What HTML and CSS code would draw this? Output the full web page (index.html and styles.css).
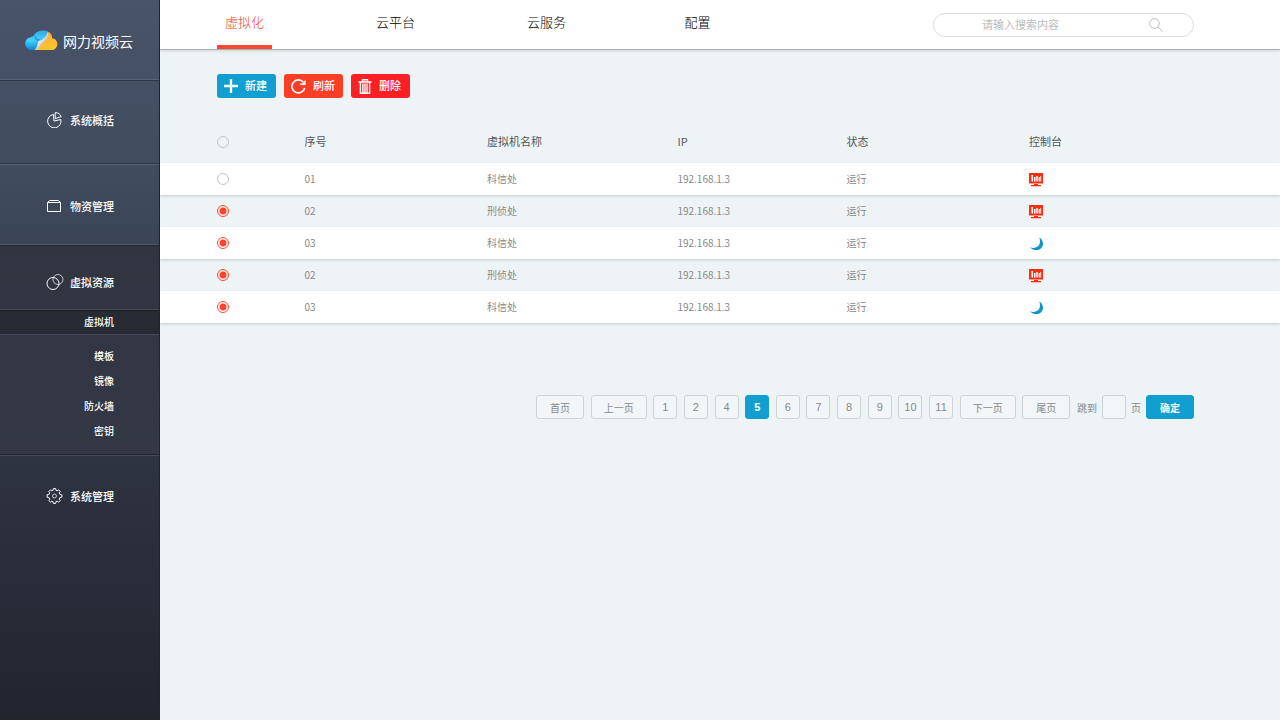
FILE: index.html
```
<!DOCTYPE html>
<html lang="zh-CN">
<head>
  <meta charset="UTF-8">
  <meta name="viewport" content="width=device-width, initial-scale=1.0">
  <title>网力视频云</title>
  <link rel="stylesheet" href="styles.css">
</head>

<body>
  <!-- iconos reutilizados -->
  <svg class="sprite" aria-hidden="true">
    <symbol id="monitor" viewBox="0 0 14 14">
      <path fill="#fb2c10" d="M0 0h14v10.500H0z M5 11h4v1h3v1.200H2V12h3z"/>
      <path fill="#fff" d="M2.500 2h1.500v6.500H2.500z M5 4h1.500v4.500H5z M7.300 3h1.500v5.500H7.300z M9.600 4h1.300v4.500H9.600z M11.300 3h0.900v5.500h-0.900z"/>
    </symbol>
    <symbol id="moon" viewBox="0 0 14 14">
      <path fill="#0f96c8" d="M10.200 0.500C14 2.500 15 7 13 10.200C10.400 14 4.600 14.400 1 10.200C4.200 11.600 7.800 10.800 9.800 8.200C11.400 6 11.400 3 10.200 0.500z"/>
    </symbol>
  </svg>

  <aside class="sidebar">
    <div class="logo">
      <svg width="33" height="21" viewBox="0 0 33 21" aria-hidden="true">
        <defs>
          <linearGradient id="gold" x1="0" y1="0" x2="0.3" y2="1">
            <stop offset="0" stop-color="#f8a648"/>
            <stop offset="1" stop-color="#fec52e"/>
          </linearGradient>
          <linearGradient id="blue" x1="0" y1="0" x2="0" y2="1">
            <stop offset="0" stop-color="#2fa8ea"/>
            <stop offset="0.5" stop-color="#43d2fb"/>
            <stop offset="1" stop-color="#1583d6"/>
          </linearGradient>
          <linearGradient id="fold" x1="0" y1="0" x2="1" y2="1">
            <stop offset="0.200" stop-color="#9fb2c6"/>
            <stop offset="0.480" stop-color="#e6eaee"/>
            <stop offset="0.700" stop-color="#b9b4b4"/>
          </linearGradient>
        </defs>
        <path fill="url(#gold)" d="M11 20L22.500 1.500C26 3 27.300 5.300 27 8.300C30.500 8.800 32.500 11.300 32.300 14.500C32 18 29.500 20 26.500 20z"/>
        <path fill="url(#blue)" d="M6 20C2.500 19.500 0.300 17 0.300 13.800C0.300 10 2.300 7.800 5.500 7.300C7.500 6.800 9 5.500 10.300 3.500C12.500 0.500 19 -0.500 23 1.500C22 6 19 8.500 16 10C13 12 14 17 10 20z"/>
        <path fill="#1d86cf" opacity="0.6" d="M10 4.500C10.500 8 12.500 9.500 15.500 9L13 11.500C10.500 11 9 9 10 4.500z"/>
        <path fill="url(#fold)" d="M9.500 20C13 17 12 14 13.500 11C17.500 10 21.500 7 22.900 2.500C23.800 5.500 22 9 20 11.300C16.800 12.500 15 17.500 11 20z"/>
      </svg>
      <span>网力视频云</span>
    </div>

    <nav class="menu">
      <a class="menu-item first" href="#">
        <svg width="18" height="16" viewBox="0 0 18 16" aria-hidden="true">
          <path d="M7.500 2.500A6.700 6.700 0 1 0 14.800 7.500L8 9z M9.200 0.600V6.600L15.200 4.600C14.300 2.200 12.300 0.600 9.200 0.600z"/>
        </svg>
        <span>系统概括</span>
      </a>

      <a class="menu-item" href="#">
        <svg width="18" height="16" viewBox="0 0 18 16" aria-hidden="true">
          <path d="M1.500 4.500h13v9h-13z M1.500 4.500L3.500 2.500h9l2 2"/>
        </svg>
        <span>物资管理</span>
      </a>

      <div class="menu-group">
        <a class="menu-item open" href="#">
          <svg width="18" height="16" viewBox="0 0 18 16" aria-hidden="true">
            <circle cx="7" cy="9.500" r="6"/>
            <circle cx="12" cy="5.500" r="5" opacity="0.7"/>
          </svg>
          <span>虚拟资源</span>
        </a>
        <a class="sub-item active" href="#">虚拟机</a>
        <div class="submenu">
          <a class="sub-item" href="#">模板</a>
          <a class="sub-item" href="#">镜像</a>
          <a class="sub-item" href="#">防火墙</a>
          <a class="sub-item" href="#">密钥</a>
        </div>
      </div>

      <a class="menu-item last" href="#">
        <svg width="18" height="16" viewBox="0 0 18 16" aria-hidden="true">
          <path d="M7.100 2.300L7.300 0.600H9.700L9.900 2.300L11.200 2.800L12.500 1.800L14.200 3.500L13.200 4.800L13.700 6.100L15.900 6.800V9.200L13.700 9.900L13.200 11.200L14.200 12.500L12.500 14.200L11.200 13.200L9.900 13.700L9.700 15.400H7.300L7.100 13.700L5.800 13.200L4.500 14.200L2.800 12.500L3.800 11.200L3.300 9.900L1.100 9.200V6.800L3.300 6.100L3.800 4.800L2.800 3.500L4.500 1.800L5.800 2.800z"/>
          <circle cx="8.500" cy="8" r="2" opacity="0.7"/>
        </svg>
        <span>系统管理</span>
      </a>
    </nav>
  </aside>

  <div class="main">
    <header class="topbar">
      <nav class="tabs">
        <a class="tab active" href="#">虚拟化</a>
        <a class="tab" href="#">云平台</a>
        <a class="tab" href="#">云服务</a>
        <a class="tab" href="#">配置</a>
      </nav>
      <form class="search">
        <input type="text" placeholder="请输入搜索内容" aria-label="搜索">
        <button type="button" aria-label="搜索">
          <svg width="14" height="14" viewBox="0 0 14 14" fill="none" stroke="#bbb" aria-hidden="true">
            <circle cx="5.500" cy="5.500" r="4.800"/>
            <path d="M9 9l4.500 4.500"/>
          </svg>
        </button>
      </form>
    </header>

    <div class="toolbar">
      <button class="btn blue" type="button">
        <svg width="14" height="14" viewBox="0 0 14 14" aria-hidden="true">
          <path fill="none" stroke="#fff" stroke-width="2.400" d="M7 0v14M0 7h14"/>
        </svg>
        <span>新建</span>
      </button>
      <button class="btn orange" type="button">
        <svg width="15" height="15" viewBox="0 0 15 15" aria-hidden="true">
          <path fill="none" stroke="#fff" stroke-width="1.700" d="M13.700 9A6.500 6.500 0 1 1 12.400 3.300"/>
          <path fill="#fff" d="M14.600 0.600V6H9.200V4.600h2.600z"/>
        </svg>
        <span>刷新</span>
      </button>
      <button class="btn red" type="button">
        <svg width="14" height="15" viewBox="0 0 14 15" fill="none" stroke="#fff" aria-hidden="true">
          <path stroke-width="1.400" d="M0.500 3h13M4.500 3V0.800h5V3M2.400 3v11.200h9.200V3M4.900 4.500v9M7 4.500v9M9.100 4.500v9"/>
        </svg>
        <span>删除</span>
      </button>
    </div>

    <table class="vm-table">
      <colgroup>
        <col class="col-check">
        <col class="col-num">
        <col class="col-name">
        <col class="col-ip">
        <col class="col-state">
        <col>
      </colgroup>
      <thead>
        <tr>
          <th><input type="checkbox" aria-label="全选"></th>
          <th>序号</th>
          <th>虚拟机名称</th>
          <th>IP</th>
          <th>状态</th>
          <th>控制台</th>
        </tr>
      </thead>
      <tbody>
        <tr>
          <td><input type="checkbox" aria-label="01"></td>
          <td>01</td>
          <td>科信处</td>
          <td>192.168.1.3</td>
          <td>运行</td>
          <td><svg class="console"><use href="#monitor"/></svg></td>
        </tr>
        <tr>
          <td><input type="checkbox" aria-label="02" checked></td>
          <td>02</td>
          <td>刑侦处</td>
          <td>192.168.1.3</td>
          <td>运行</td>
          <td><svg class="console"><use href="#monitor"/></svg></td>
        </tr>
        <tr>
          <td><input type="checkbox" aria-label="03" checked></td>
          <td>03</td>
          <td>科信处</td>
          <td>192.168.1.3</td>
          <td>运行</td>
          <td><svg class="console"><use href="#moon"/></svg></td>
        </tr>
        <tr>
          <td><input type="checkbox" aria-label="02" checked></td>
          <td>02</td>
          <td>刑侦处</td>
          <td>192.168.1.3</td>
          <td>运行</td>
          <td><svg class="console"><use href="#monitor"/></svg></td>
        </tr>
        <tr>
          <td><input type="checkbox" aria-label="03" checked></td>
          <td>03</td>
          <td>科信处</td>
          <td>192.168.1.3</td>
          <td>运行</td>
          <td><svg class="console"><use href="#moon"/></svg></td>
        </tr>
      </tbody>
    </table>

    <div class="pager">
      <button class="page wide" type="button">首页</button>
      <button class="page wider" type="button">上一页</button>
      <button class="page" type="button">1</button>
      <button class="page" type="button">2</button>
      <button class="page" type="button">4</button>
      <button class="page current" type="button">5</button>
      <button class="page" type="button">6</button>
      <button class="page" type="button">7</button>
      <button class="page" type="button">8</button>
      <button class="page" type="button">9</button>
      <button class="page" type="button">10</button>
      <button class="page" type="button">11</button>
      <button class="page wider" type="button">下一页</button>
      <button class="page wide" type="button">尾页</button>
      <div class="jump">
        <label for="salto">跳到</label>
        <input class="page" type="text" id="salto">
        <span>页</span>
        <button class="page wide current" type="button">确定</button>
      </div>
    </div>
  </div>
</body>
</html>
```

FILE: styles.css
```
* {
  box-sizing: border-box;
}
body {
  margin: 0;
  min-height: 100vh;
  display: flex;
  background: #eef4f5;
  font-family: "Noto Sans CJK SC", sans-serif;
  font-size: 10px;
  color: #888;
}
a {
  color: inherit;
  text-decoration: none;
}
button, input {
  font-family: inherit;
  margin: 0;
}
button {
  cursor: pointer;
}
.sprite {
  position: absolute;
  width: 0;
  height: 0;
}

/* menú lateral */
.sidebar {
  flex: none;
  width: 160px;
  color: #fff;
  background: linear-gradient(#4a5469, #414b5e 25%, #3b4457 34%, #2e3341 64%, #21252e);
  border-right: 1px solid #1c2436;
}
.logo {
  display: flex;
  align-items: center;
  gap: 5px;
  height: 80px;
  padding: 2px 0 0 25px;
  font-size: 14px;
  border-bottom: 1px solid #5b6579;
}
.menu-item {
  display: flex;
  align-items: center;
  justify-content: flex-end;
  gap: 6px;
  height: 81px;
  padding: 2px 45px 0 0;
  font-size: 11px;
  font-weight: 500;
  border-top: 1px solid #566074;
  border-bottom: 1px solid #4d5a6c;
}
.menu-item svg {
  fill: none;
  stroke: #fff;
}
.menu-item.first {
  height: 84px;
  padding: 0 45px 4px 0;
  border-top-color: #2e3646;
  border-bottom-color: #2e3646;
}
.menu-group {
  background: linear-gradient(#303540, #333845);
  border-top: 1px solid #22262f;
  border-bottom: 1px solid #20242e;
}
.menu-item.open {
  height: 64px;
  padding-top: 9px;
  border-top: 0;
  border-bottom-color: #454c59;
}
.menu-item.last {
  height: 81px;
  padding-top: 0;
  border-top-color: #454b5a;
  border-bottom: 0;
}
.sub-item {
  display: block;
  height: 25px;
  line-height: 25px;
  padding-right: 45px;
  text-align: right;
  font-weight: 500;
}
.sub-item.active {
  line-height: 22px;
  background: #262a33;
  border-top: 1px solid #1b1e25;
  border-bottom: 1px solid #454c59;
}
.submenu {
  padding: 8px 0 11px;
}

/* barra superior */
.main {
  flex: 1;
  min-width: 0;
}
.topbar {
  display: flex;
  justify-content: space-between;
  height: 50px;
  padding: 0 86px 0 57px;
  background: #fff;
  border-bottom: 1px solid #a5b0b6;
  box-shadow: 0 1px 3px rgba(0, 40, 50, 0.15);
}
.tabs {
  display: flex;
  gap: 96px;
}
.tab {
  width: 55px;
  height: 49px;
  text-align: center;
  line-height: 43px;
  font-size: 13px;
  font-weight: 300;
  color: #000;
  border-bottom: 4px solid transparent;
}
.tab.active {
  color: #fe3a22;
  border-bottom-color: #fe4a33;
}
.search {
  display: flex;
  align-items: center;
  width: 261px;
  height: 24px;
  margin-top: 13px;
  padding: 0 30px 0 48px;
  border: 1px solid #ddd;
  border-radius: 12px;
}
.search input {
  flex: 1;
  min-width: 0;
  padding: 0 0 2px;
  border: 0;
  outline: 0;
  background: none;
  font-size: 11px;
}
.search input::placeholder {
  color: #bbb;
}
.search button {
  display: flex;
  padding: 0;
  border: 0;
  background: none;
}

/* botones */
.toolbar {
  display: flex;
  gap: 8px;
  padding: 24px 57px 23px;
}
.btn {
  display: flex;
  align-items: center;
  gap: 7px;
  width: 59px;
  height: 24px;
  padding: 0 7px;
  border: 0;
  border-radius: 3px;
  color: #fff;
  font-size: 11px;
  font-weight: 500;
  white-space: nowrap;
}
.btn svg {
  flex: none;
}
.btn span {
  padding-bottom: 2px;
}
.blue {
  background: #109fd0;
}
.orange {
  background: #fb3e26;
}
.red {
  background: #fb2024;
}

/* tabla */
.vm-table {
  width: 100%;
  table-layout: fixed;
  border-collapse: collapse;
}
.col-check {
  width: 12.9%;
}
.col-num {
  width: 16.3%;
}
.col-name {
  width: 17%;
}
.col-ip {
  width: 15.1%;
}
.col-state {
  width: 16.3%;
}
.vm-table th, .vm-table td {
  height: 32px;
  padding: 0 0 2px;
  text-align: left;
  vertical-align: middle;
}
.vm-table th {
  height: 42px;
  font-size: 11px;
  font-weight: 400;
  color: #555;
}
.vm-table th:first-child, .vm-table td:first-child {
  padding: 0 0 0 57px;
}
.vm-table td:last-child {
  padding: 2px 0 0;
}
.vm-table tbody tr:nth-child(odd) {
  background: #fff;
  box-shadow: 0 1px 3px rgba(0, 50, 50, 0.2);
}
.vm-table input {
  display: block;
  appearance: none;
  width: 12px;
  height: 12px;
  border: 1px solid #c4c4c4;
  border-radius: 50%;
}
.vm-table input:checked {
  border-color: #fe4430;
  background: radial-gradient(circle, #fe4430 3px, transparent 4px);
}
.console {
  display: block;
  width: 14px;
  height: 14px;
}

/* paginación */
.pager {
  display: flex;
  align-items: center;
  justify-content: space-between;
  max-width: 658px;
  margin: 72px 86px 0 auto;
}
.jump {
  display: flex;
  align-items: center;
  gap: 5px;
}
.page {
  width: 24px;
  height: 24px;
  padding: 0;
  border: 1px solid #ccd4d6;
  border-radius: 3px;
  background: #f2f6f8;
  color: #888;
  font-family: "Liberation Sans", "Noto Sans CJK SC", sans-serif;
  font-size: 11px;
  text-align: center;
}
.wide {
  width: 48px;
  font-size: 10px;
}
.wider {
  width: 56px;
  font-size: 10px;
}
.current {
  border-color: #109fd0;
  background: #109fd0;
  color: #fff;
  font-weight: 700;
}
```
